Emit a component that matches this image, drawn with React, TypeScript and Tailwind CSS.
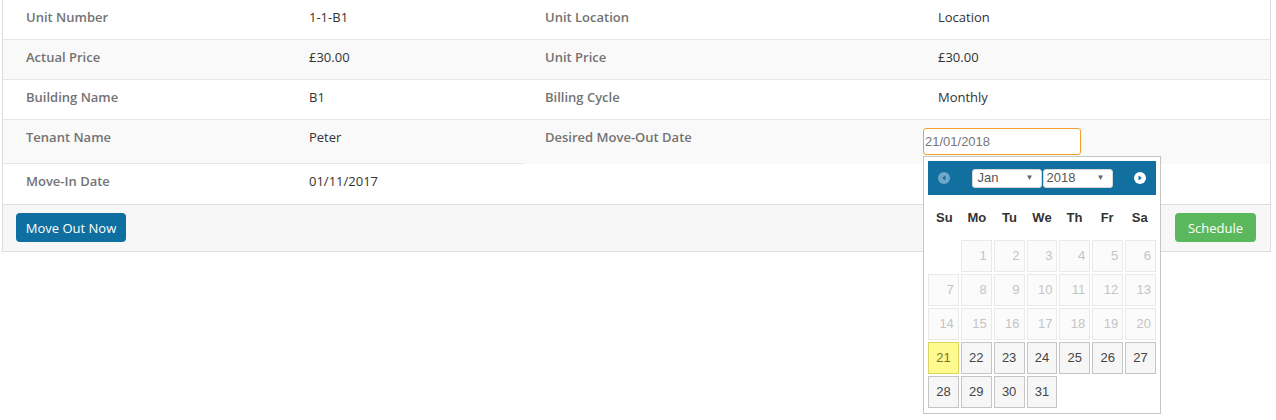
import React from 'react';

const leftRows = [
    ['Unit Number', '1-1-B1'],
    ['Actual Price', '£30.00'],
    ['Building Name', 'B1'],
    ['Tenant Name', 'Peter'],
    ['Move-In Date', '01/11/2017'],
];

const rightRows = [
    ['Unit Location', 'Location'],
    ['Unit Price', '£30.00'],
    ['Billing Cycle', 'Monthly'],
];

const dayNames = ['Su', 'Mo', 'Tu', 'We', 'Th', 'Fr', 'Sa'];

function rowClass(i: number) {
    const bg = i % 2 === 1 ? 'bg-[#f9f9f9]' : 'bg-white';
    const h = i === 3 ? 'h-[44px]' : 'h-10';
    return `${bg} ${h} flex`;
}

function Calendar() {
    // Jan 2018 starts on a Monday
    const cells: (number | null)[] = [null];
    for (let d = 1; d <= 31; d++) cells.push(d);

    return (
        <div className="absolute left-0 top-[28px] w-[238px] border border-[#c5c5c5] bg-white px-[4px] pt-[4px] pb-[5px] font-['Liberation_Sans',Arial,sans-serif] z-10">
            <div className="h-[34px] bg-[#1170a0] relative flex items-center justify-center gap-px">
                <span className="absolute left-[10px] top-[11px] w-[12px] h-[12px] rounded-full bg-[#6fa6c9] flex items-center justify-center">
                    <svg width="6" height="6" viewBox="0 0 6 6">
                        <path d="M4.5 0.5 L1.2 3 L4.5 5.5 Z" fill="#1170a0" />
                    </svg>
                </span>
                <div className="w-[70px] h-[19px] bg-white rounded-[3px] flex items-center justify-between pl-[5px] pr-[7px] text-[13px] text-[#555] border border-[#d9d9d9]">
                    <span>Jan</span>
                    <span className="text-[8px] text-[#666]">▼</span>
                </div>
                <div className="w-[70px] h-[19px] bg-white rounded-[3px] flex items-center justify-between pl-[3px] pr-[7px] text-[13px] text-[#555] border border-[#d9d9d9]">
                    <span>2018</span>
                    <span className="text-[8px] text-[#666]">▼</span>
                </div>
                <span className="absolute right-[10px] top-[11px] w-[12px] h-[12px] rounded-full bg-white flex items-center justify-center">
                    <svg width="6" height="6" viewBox="0 0 6 6">
                        <path d="M1.5 0.5 L4.8 3 L1.5 5.5 Z" fill="#1170a0" />
                    </svg>
                </span>
            </div>
            <div className="grid grid-cols-7 h-[45px] items-center">
                {dayNames.map((n) => (
                    <div key={n} className="text-center text-[13px] font-bold text-[#333]">
                        {n}
                    </div>
                ))}
            </div>
            <div className="grid grid-cols-7 gap-[2px]">
                {cells.map((d, i) => {
                    if (d === null) return <div key={i} className="h-[32px]" />;
                    if (d < 21) {
                        return (
                            <div
                                key={i}
                                className="h-[32px] border border-[#e9e9e9] bg-[#fbfbfb] text-[#c4c4c4] text-[13px] flex items-center justify-end pr-[4px]"
                            >
                                {d}
                            </div>
                        );
                    }
                    if (d === 21) {
                        return (
                            <div
                                key={i}
                                className="h-[32px] border border-[#dad55e] bg-[#fffa90] text-[#777620] text-[13px] flex items-center justify-center"
                            >
                                {d}
                            </div>
                        );
                    }
                    return (
                        <div
                            key={i}
                            className="h-[32px] border border-[#c5c5c5] bg-[#f6f6f6] text-[#454545] text-[13px] flex items-center justify-center"
                        >
                            {d}
                        </div>
                    );
                })}
            </div>
        </div>
    );
}

export default function App() {
    return (
        <div className="bg-white w-[1276px] h-[420px] font-['Open_Sans',sans-serif] text-[13px] leading-[18px]">
            <div className="ml-[2px] w-[1269px] border-x border-b border-[#ddd]">
                <div className="flex">
                    <div className="w-[520px]">
                        {leftRows.map(([label, value], i) => (
                            <div
                                key={label}
                                className={`${rowClass(i)} ${i < 4 ? 'border-b border-[#e6e6e6]' : ''}`}
                            >
                                <div className="w-[283px] pl-[23px] pt-[8px] font-semibold text-[#737373]">
                                    {label}
                                </div>
                                <div className="flex-1 pl-[23px] pt-[8px] text-[#333]">{value}</div>
                            </div>
                        ))}
                    </div>
                    <div className="flex-1">
                        {rightRows.map(([label, value], i) => (
                            <div key={label} className={`${rowClass(i)} border-b border-[#e6e6e6]`}>
                                <div className="w-[392px] pl-[22px] pt-[8px] font-semibold text-[#737373]">
                                    {label}
                                </div>
                                <div className="flex-1 pl-[23px] pt-[8px] text-[#333]">{value}</div>
                            </div>
                        ))}
                        <div className="h-[44px] bg-[#f9f9f9] flex">
                            <div className="w-[392px] pl-[22px] pt-[8px] font-semibold text-[#737373]">
                                Desired Move-Out Date
                            </div>
                            <div className="flex-1 pl-[8px] pt-[8px]">
                                <div className="relative w-[158px]">
                                    <div className="h-[27px] w-[158px] border border-[#f0a12c] rounded-[3px] bg-white pl-[1px] flex items-center text-[13px] text-[#777] font-['Liberation_Sans',Arial,sans-serif]">
                                        21/01/2018
                                    </div>
                                    <Calendar />
                                </div>
                            </div>
                        </div>
                    </div>
                </div>
                <div className="h-[47px] border-t border-[#ddd] bg-[#f7f7f7] flex items-start justify-between pl-[13px] pr-[14px] pt-[8px]">
                    <button className="h-[29px] w-[110px] rounded-[4px] bg-[#0f6fa0] text-white text-[13px]">
                        Move Out Now
                    </button>
                    <button className="h-[29px] w-[81px] rounded-[4px] bg-[#5cb85c] text-white text-[13px]">
                        Schedule
                    </button>
                </div>
            </div>
        </div>
    );
}
